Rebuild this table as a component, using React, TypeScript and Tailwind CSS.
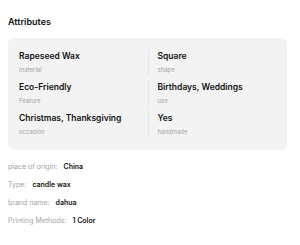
import React from "react";

const attrs: [string, string][] = [
  ["Rapeseed Wax", "material"],
  ["Square", "shape"],
  ["Eco-Friendly", "Feature"],
  ["Birthdays, Weddings", "use"],
  ["Christmas, Thanksgiving", "occasion"],
  ["Yes", "handmade"],
];

const props: [string, string][] = [
  ["place of origin:", "China"],
  ["Type:", "candle wax"],
  ["brand name:", "dahua"],
  ["Printing Methods:", "1 Color"],
];

export default function App() {
  return (
    <div className="w-[300px] h-[245px] bg-white px-[8px] pt-[16px] text-black" style={{ fontFamily: "Inter, 'Noto Sans', sans-serif" }}>
      <div className="text-[9px] font-semibold leading-[11px] text-[#111]">Attributes</div>
      <div className="mt-[11px] w-[279px] rounded-[6px] bg-[#f3f3f3] px-[11px] pt-[11px] pb-[13px] grid grid-cols-2 gap-y-[5px]">
        {attrs.map(([v, l], i) => (
          <div key={i} className={i % 2 === 1 ? "border-l border-[#e6e6e6] pl-[9px] py-[1px]" : "py-[1px]"}>
            <div className="text-[8.5px] font-semibold leading-[12px] text-[#111]">{v}</div>
            <div className="mt-[4px] text-[6px] leading-[8px] text-[#a3a3a3]">{l}</div>
          </div>
        ))}
      </div>
      <div className="mt-[12px] flex flex-col gap-[9px]">
        {props.map(([k, v], i) => (
          <div key={i} className="flex items-center text-[7px] leading-[9px]">
            <span className="text-[#a3a3a3]">{k}</span>
            <span className="ml-[6px] font-semibold text-[#111]">{v}</span>
          </div>
        ))}
      </div>
    </div>
  );
}
